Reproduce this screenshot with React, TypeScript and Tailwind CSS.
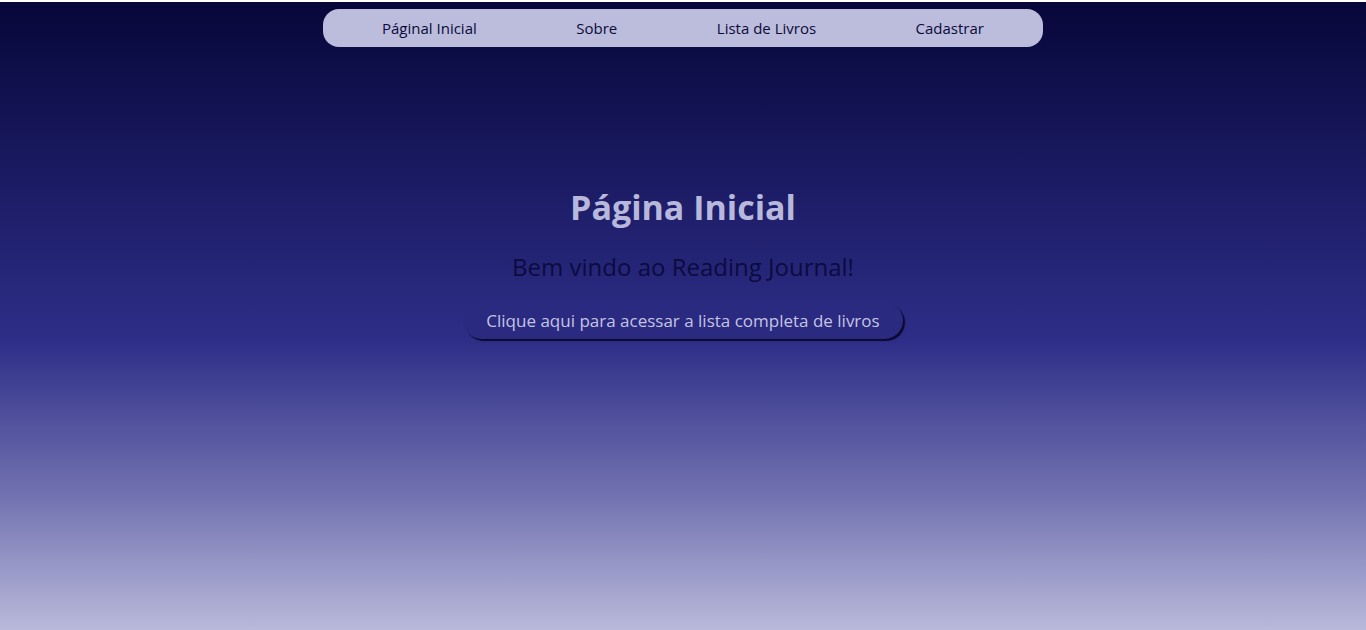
export default function App() {
  return (
    <div className="min-h-[630px] w-full bg-white pt-[2px]" style={{ fontFamily: '"Open Sans", "Noto Sans", sans-serif' }}>
      <div className="flex h-[628px] flex-col items-center bg-[linear-gradient(to_bottom,#07073a_0%,#1c1c66_30%,#2e2e88_54%,#7070b0_78%,#b9b9db_100%)]">
        <nav className="mt-[7px] flex h-[38px] w-[720px] items-center justify-between rounded-[16px] bg-[#bcbcdc] px-[59px] pt-[1px] text-[15px] text-[#0b0b3a]">
          <a>Páginal Inicial</a>
          <a>Sobre</a>
          <a>Lista de Livros</a>
          <a>Cadastrar</a>
        </nav>
        <h1 className="mt-[138px] text-[34px] font-bold leading-[44px] text-[#b8b8dc]">Página Inicial</h1>
        <p className="mt-[23px] text-[24px] leading-[30px] text-[#0b0b40]">Bem vindo ao Reading Journal!</p>
        <button className="mt-[20px] h-[37px] rounded-full bg-[#2a2a80] px-[23px] text-[17px] text-[#c4c4e4] shadow-[2px_2px_1px_#0a0a30]">
          Clique aqui para acessar a lista completa de livros
        </button>
      </div>
    </div>
  );
}
